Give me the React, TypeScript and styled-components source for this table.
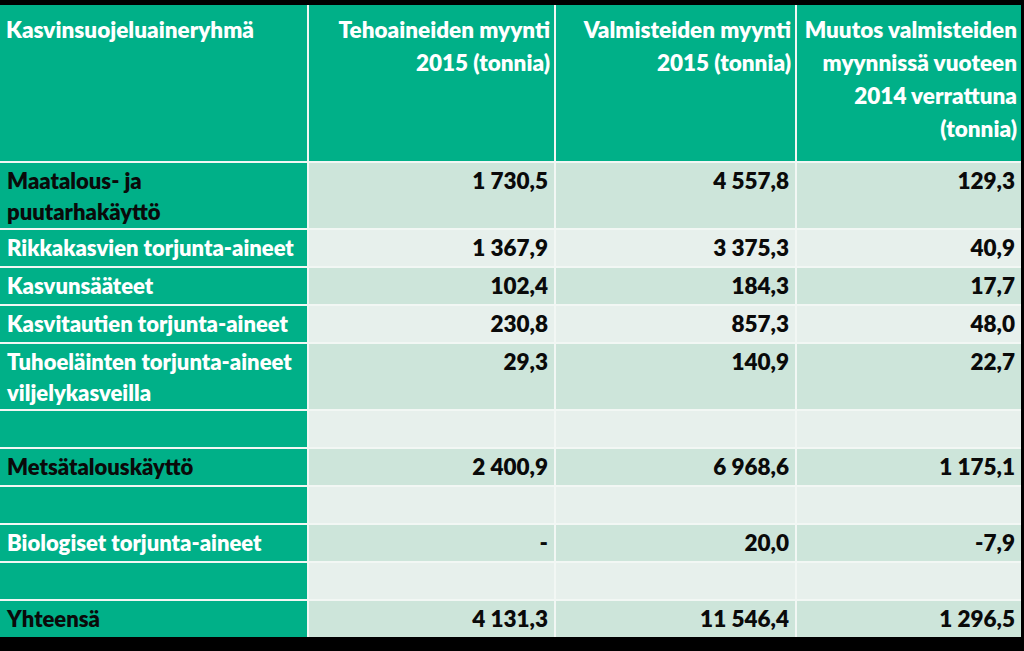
import React from 'react';
import styled, { createGlobalStyle } from 'styled-components';

type Row = {
  label: string[];
  dark: boolean;
  values: string[];
};

const rows: Row[] = [
  { label: ['Maatalous- ja', 'puutarhakäyttö'], dark: true, values: ['1 730,5', '4 557,8', '129,3'] },
  { label: ['Rikkakasvien torjunta-aineet'], dark: false, values: ['1 367,9', '3 375,3', '40,9'] },
  { label: ['Kasvunsääteet'], dark: false, values: ['102,4', '184,3', '17,7'] },
  { label: ['Kasvitautien torjunta-aineet'], dark: false, values: ['230,8', '857,3', '48,0'] },
  { label: ['Tuhoeläinten torjunta-aineet', 'viljelykasveilla'], dark: false, values: ['29,3', '140,9', '22,7'] },
  { label: [], dark: false, values: ['', '', ''] },
  { label: ['Metsätalouskäyttö'], dark: true, values: ['2 400,9', '6 968,6', '1 175,1'] },
  { label: [], dark: false, values: ['', '', ''] },
  { label: ['Biologiset torjunta-aineet'], dark: false, values: ['-', '20,0', '-7,9'] },
  { label: [], dark: false, values: ['', '', ''] },
  { label: ['Yhteensä'], dark: true, values: ['4 131,3', '11 546,4', '1 296,5'] },
];

const headers = [
  ['Tehoaineiden myynti', '2015 (tonnia)'],
  ['Valmisteiden myynti', '2015 (tonnia)'],
  ['Muutos valmisteiden', 'myynnissä vuoteen', '2014 verrattuna', '(tonnia)'],
];

const App: React.FC = () => {
  const rowHeights = ['156px', ...rows.map((r) => (r.label.length > 1 ? '65px' : '36px'))].join(' ');

  return (
    <>
      <GlobalStyle />
      <Page>
        <Table style={{ gridTemplateRows: rowHeights }}>
          <HeadCell $align="left">Kasvinsuojeluaineryhmä</HeadCell>
          {headers.map((h, i) => (
            <HeadCell key={i} $align="right">
              {h.map((line) => (
                <Line key={line}>{line}</Line>
              ))}
            </HeadCell>
          ))}
          {rows.map((row, index) => (
            <React.Fragment key={index}>
              <LabelCell $dark={row.dark}>
                {row.label.map((line) => (
                  <Line key={line}>{line}</Line>
                ))}
              </LabelCell>
              {row.values.map((v, i) => (
                <ValueCell key={i} $shade={index % 2 === 0}>
                  {v}
                </ValueCell>
              ))}
            </React.Fragment>
          ))}
        </Table>
      </Page>
    </>
  );
};
export default App;

const GlobalStyle = createGlobalStyle`
  html, body {
    margin: 0;
    padding: 0;
    background: #000;
  }
`;

const Page = styled.div`
  width: 1024px;
  height: 651px;
  padding-top: 5px;
  box-sizing: border-box;
  background: #000;
  overflow: hidden;

  font-family: Lato, 'Open Sans', sans-serif;
  font-weight: 800;
  font-size: 22.5px;
`;

const Table = styled.div`
  display: grid;
  grid-template-columns: 307px 245px 239px 224px;
  gap: 2px;
  width: 1021px;
  background-color: #f2f7f4;
`;

const Line = styled.div`
  white-space: nowrap;
`;

const HeadCell = styled.div<{ $align: 'left' | 'right' }>`
  padding: 8px 4px 0 6px;
  background-color: #00b088;
  color: #fff;
  line-height: 33px;
  text-align: ${({ $align }) => $align};
`;

const LabelCell = styled.div<{ $dark: boolean }>`
  padding: 2px 6px 0 7px;
  background-color: #00b088;
  color: ${({ $dark }) => ($dark ? '#0a0a0a' : '#fff')};
  font-size: 22px;
  line-height: 31px;
`;

const ValueCell = styled.div<{ $shade: boolean }>`
  padding: 2px 6px 0 6px;
  background-color: ${({ $shade }) => ($shade ? '#cde5da' : '#e7f0ec')};
  color: #0a0a0a;
  font-size: 22.5px;
  line-height: 31px;
  text-align: right;
`;
